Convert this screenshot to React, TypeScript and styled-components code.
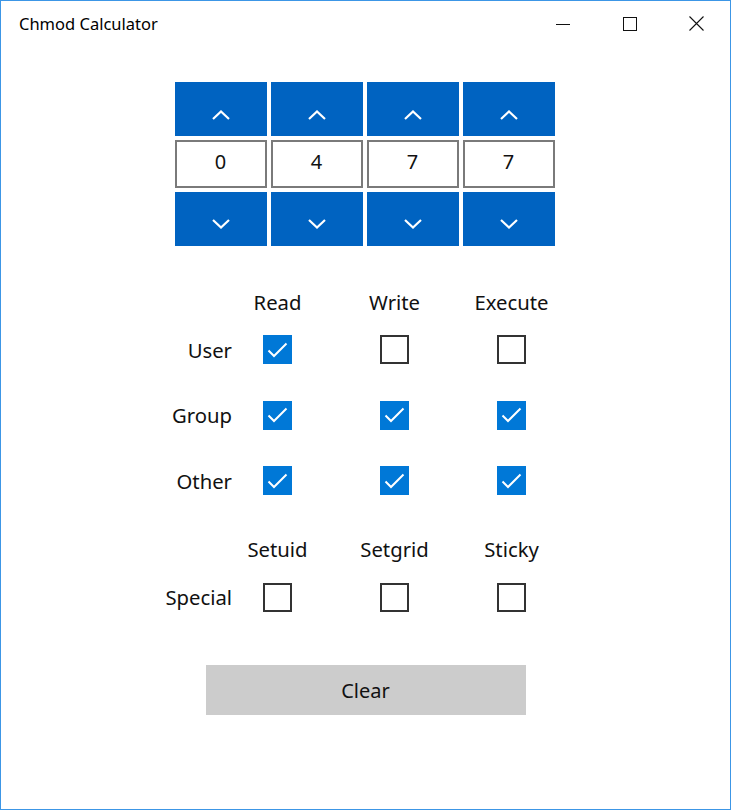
import React, { useState } from 'react';
import styled, { createGlobalStyle } from 'styled-components';

const GlobalStyle = createGlobalStyle`
  html, body {
    margin: 0;
    padding: 0;
    background: #fff;
  }
  body {
    font-family: 'Noto Sans', 'Open Sans', sans-serif;
    color: #000;
  }
`;

const Window = styled.div`
  box-sizing: border-box;
  width: 731px;
  height: 810px;
  border: 1px solid #3c96e6;
  background: #fff;
  display: flex;
  flex-direction: column;
  align-items: center;
`;

const TitleBar = styled.div`
  align-self: stretch;
  height: 45px;
  display: flex;
  align-items: center;
  padding-left: 18px;
`;

const Title = styled.span`
  flex: 1;
  font-size: 16.5px;
  color: #000;
`;

const Caption = styled.button`
  width: 67px;
  height: 45px;
  border: none;
  background: transparent;
  display: flex;
  align-items: center;
  justify-content: center;
  padding: 0;
`;

const SpinnerGrid = styled.div`
  margin-top: 36px;
  margin-right: 2px;
  display: grid;
  grid-template-columns: repeat(4, 92px);
  grid-template-rows: 54px 48px 54px;
  column-gap: 4px;
  row-gap: 4px;
`;

const SpinButton = styled.button<{ $down?: boolean }>`
  border: none;
  background: #0063c1;
  display: flex;
  align-items: center;
  justify-content: center;
  padding: ${(p) => (p.$down ? '10px 0 0' : '12px 0 0')};
  cursor: pointer;
`;

const DigitBox = styled.div`
  box-sizing: border-box;
  border: 2px solid #7a7a7a;
  background: #fff;
  display: flex;
  align-items: center;
  justify-content: center;
  padding-bottom: 5px;
  font-size: 20px;
  color: #111;
`;

const PermGrid = styled.div<{ $top: number }>`
  align-self: stretch;
  margin-top: ${(p) => p.$top}px;
  display: grid;
  grid-template-columns: 262px 117px 117px 117px;
  grid-auto-rows: 65.5px;
  grid-template-rows: 31px;
  align-items: center;
`;

const ColHead = styled.div`
  width: 29px;
  display: flex;
  justify-content: center;
  white-space: nowrap;
  font-size: 20.3px;
  color: #111;
`;

const RowLabel = styled.div`
  justify-self: end;
  padding-right: 31px;
  font-size: 20.3px;
  color: #111;
`;

const Box = styled.button<{ $on: boolean }>`
  box-sizing: border-box;
  width: 29px;
  height: 29px;
  padding: 0;
  border: ${(p) => (p.$on ? 'none' : '2px solid #333')};
  background: ${(p) => (p.$on ? '#0078d7' : '#fff')};
  display: flex;
  align-items: center;
  justify-content: center;
  cursor: pointer;
`;

const ClearButton = styled.button`
  margin-top: 35px;
  width: 320px;
  height: 50px;
  border: none;
  background: #cccccc;
  font-family: inherit;
  font-size: 20px;
  color: #111;
  cursor: pointer;
`;

const ChevronUp = () => (
  <svg width="18" height="10" viewBox="0 0 18 10">
    <path d="M1 9 L9 1.5 L17 9" fill="none" stroke="#fff" strokeWidth="2.2" />
  </svg>
);

const ChevronDown = () => (
  <svg width="18" height="10" viewBox="0 0 18 10">
    <path d="M1 1 L9 8.5 L17 1" fill="none" stroke="#fff" strokeWidth="2.2" />
  </svg>
);

const Check = () => (
  <svg width="21" height="16" viewBox="0 0 21 16">
    <path d="M1.5 8.5 L7 14 L19.5 1.5" fill="none" stroke="#fff" strokeWidth="2" />
  </svg>
);

const bits = [4, 2, 1];

export default function App() {
  const [digits, setDigits] = useState([0, 4, 7, 7]);

  const bump = (i: number, d: number) =>
    setDigits((ds) => ds.map((v, j) => (j === i ? (v + d + 8) % 8 : v)));

  const toggle = (i: number, bit: number) =>
    setDigits((ds) => ds.map((v, j) => (j === i ? v ^ bit : v)));

  const rows = [
    { label: 'User', idx: 1 },
    { label: 'Group', idx: 2 },
    { label: 'Other', idx: 3 },
  ];

  return (
    <>
      <GlobalStyle />
      <Window>
        <TitleBar>
          <Title>Chmod Calculator</Title>
          <Caption>
            <svg width="14" height="14" viewBox="0 0 14 14">
              <path d="M0 7.5 H14" stroke="#111" strokeWidth="1" />
            </svg>
          </Caption>
          <Caption>
            <svg width="14" height="14" viewBox="0 0 14 14">
              <rect x="0.5" y="0.5" width="13" height="13" fill="none" stroke="#111" strokeWidth="1" />
            </svg>
          </Caption>
          <Caption>
            <svg width="15" height="15" viewBox="0 0 15 15">
              <path d="M0.5 0.5 L14.5 14.5 M14.5 0.5 L0.5 14.5" stroke="#111" strokeWidth="1.1" />
            </svg>
          </Caption>
        </TitleBar>

        <SpinnerGrid>
          {digits.map((_, i) => (
            <SpinButton key={`u${i}`} onClick={() => bump(i, 1)}>
              <ChevronUp />
            </SpinButton>
          ))}
          {digits.map((v, i) => (
            <DigitBox key={`d${i}`}>{v}</DigitBox>
          ))}
          {digits.map((_, i) => (
            <SpinButton key={`n${i}`} $down onClick={() => bump(i, -1)}>
              <ChevronDown />
            </SpinButton>
          ))}
        </SpinnerGrid>

        <PermGrid $top={40}>
          <div />
          <ColHead>Read</ColHead>
          <ColHead>Write</ColHead>
          <ColHead>Execute</ColHead>
          {rows.map((r) => (
            <React.Fragment key={r.label}>
              <RowLabel>{r.label}</RowLabel>
              {bits.map((b) => {
                const on = (digits[r.idx] & b) !== 0;
                return (
                  <Box key={b} $on={on} onClick={() => toggle(r.idx, b)}>
                    {on && <Check />}
                  </Box>
                );
              })}
            </React.Fragment>
          ))}
        </PermGrid>

        <PermGrid $top={20}>
          <div />
          <ColHead>Setuid</ColHead>
          <ColHead>Setgrid</ColHead>
          <ColHead>Sticky</ColHead>
          <RowLabel>Special</RowLabel>
          {bits.map((b) => {
            const on = (digits[0] & b) !== 0;
            return (
              <Box key={b} $on={on} onClick={() => toggle(0, b)}>
                {on && <Check />}
              </Box>
            );
          })}
        </PermGrid>

        <ClearButton onClick={() => setDigits([0, 0, 0, 0])}>Clear</ClearButton>
      </Window>
    </>
  );
}
